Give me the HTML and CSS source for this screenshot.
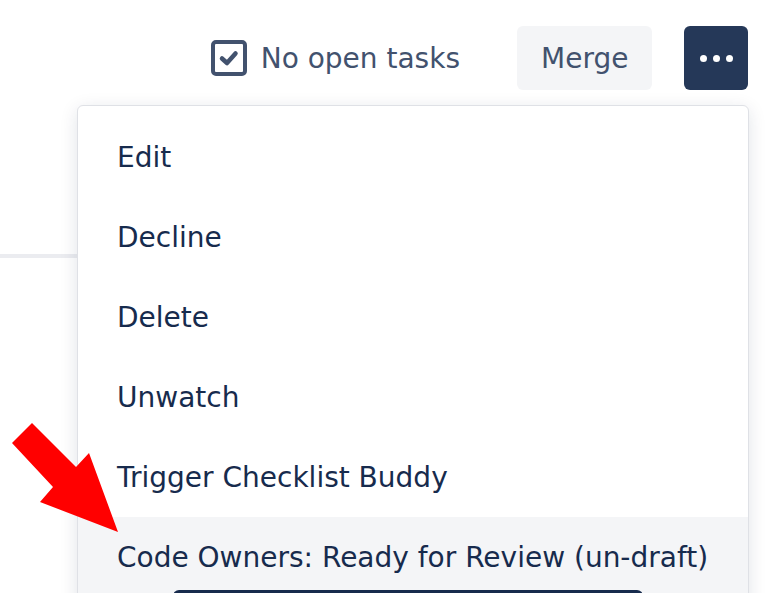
FILE: index.html
```html
<!DOCTYPE html>
<html lang="en">
<head>
  <meta charset="UTF-8">
  <meta name="viewport" content="width=device-width, initial-scale=1.0">
  <title>Pull request actions</title>
  <link rel="stylesheet" href="styles.css">
</head>
<body>
  <div class="page">
    <div class="toolbar">
      <div class="tasks">
        <svg class="task-icon" width="36" height="36" viewBox="0 0 36 36">
          <rect x="2" y="2" width="32" height="32" rx="3" fill="none" stroke="#42526e" stroke-width="4"/>
          <path d="M11 18.5 L16 23 L24.5 13.5" fill="none" stroke="#42526e" stroke-width="4.5" stroke-linecap="round" stroke-linejoin="round"/>
        </svg>
        <span>No open tasks</span>
      </div>
      <button class="btn merge">Merge</button>
      <button class="btn more" aria-label="More actions">
        <span class="dot"></span><span class="dot"></span><span class="dot"></span>
      </button>
    </div>

    <div class="divider"></div>

    <ul class="menu">
      <li>Edit</li>
      <li>Decline</li>
      <li>Delete</li>
      <li>Unwatch</li>
      <li>Trigger Checklist Buddy</li>
      <li class="active">Code Owners: Ready for Review (un-draft)</li>
    </ul>

    <div class="tooltip"></div>

    <svg class="arrow" width="130" height="130" viewBox="0 0 130 130">
      <polygon points="32,8 12,28 53,72 40,87 118,117 89,38 76,52" fill="#ff0000"/>
    </svg>
  </div>
</body>
</html>
```

FILE: styles.css
```css
* { box-sizing: border-box; }
body {
  margin: 0;
  background: #ffffff;
  font-family: 'DejaVu Sans', sans-serif;
  overflow: hidden;
}
.page {
  position: relative;
  width: 767px;
  height: 593px;
  overflow: hidden;
}
.toolbar {
  display: flex;
  justify-content: flex-end;
  align-items: center;
  padding: 26px 19px 0 0;
  height: 90px;
}
.tasks {
  display: flex;
  align-items: center;
  gap: 14px;
  color: #42526e;
  font-size: 28px;
  margin-right: 57px;
}
.task-icon { display: block; }
.btn {
  border: none;
  border-radius: 6px;
  height: 64px;
  font-family: inherit;
  font-size: 28px;
  cursor: pointer;
}
.merge {
  background: #f4f5f7;
  color: #42526e;
  padding: 0 24px;
  width: 135px;
  margin-right: 32px;
}
.more {
  width: 64px;
  background: #253858;
  display: flex;
  align-items: center;
  justify-content: center;
  gap: 6px;
  padding: 0;
}
.dot {
  width: 7px;
  height: 7px;
  border-radius: 50%;
  background: #ffffff;
}
.divider {
  margin-top: 164px;
  width: 500px;
  height: 4px;
  background: #ebecf0;
}
.menu {
  position: absolute;
  top: 105px;
  left: 77px;
  width: 672px;
  height: 520px;
  margin: 0;
  padding: 11px 0 0;
  list-style: none;
  background: #ffffff;
  border: 1px solid #dfe1e6;
  border-radius: 6px;
  box-shadow: 0 4px 18px rgba(9, 30, 66, 0.12);
}
.menu li {
  height: 80px;
  display: flex;
  align-items: center;
  padding-left: 39px;
  color: #172b4d;
  font-size: 28px;
}
.menu li.active {
  background: #f4f5f7;
}
.tooltip {
  position: absolute;
  top: 590px;
  left: 173px;
  width: 470px;
  height: 30px;
  background: #172b4d;
  border-radius: 6px;
}
.arrow {
  position: absolute;
  top: 415px;
  left: 0;
}
```
